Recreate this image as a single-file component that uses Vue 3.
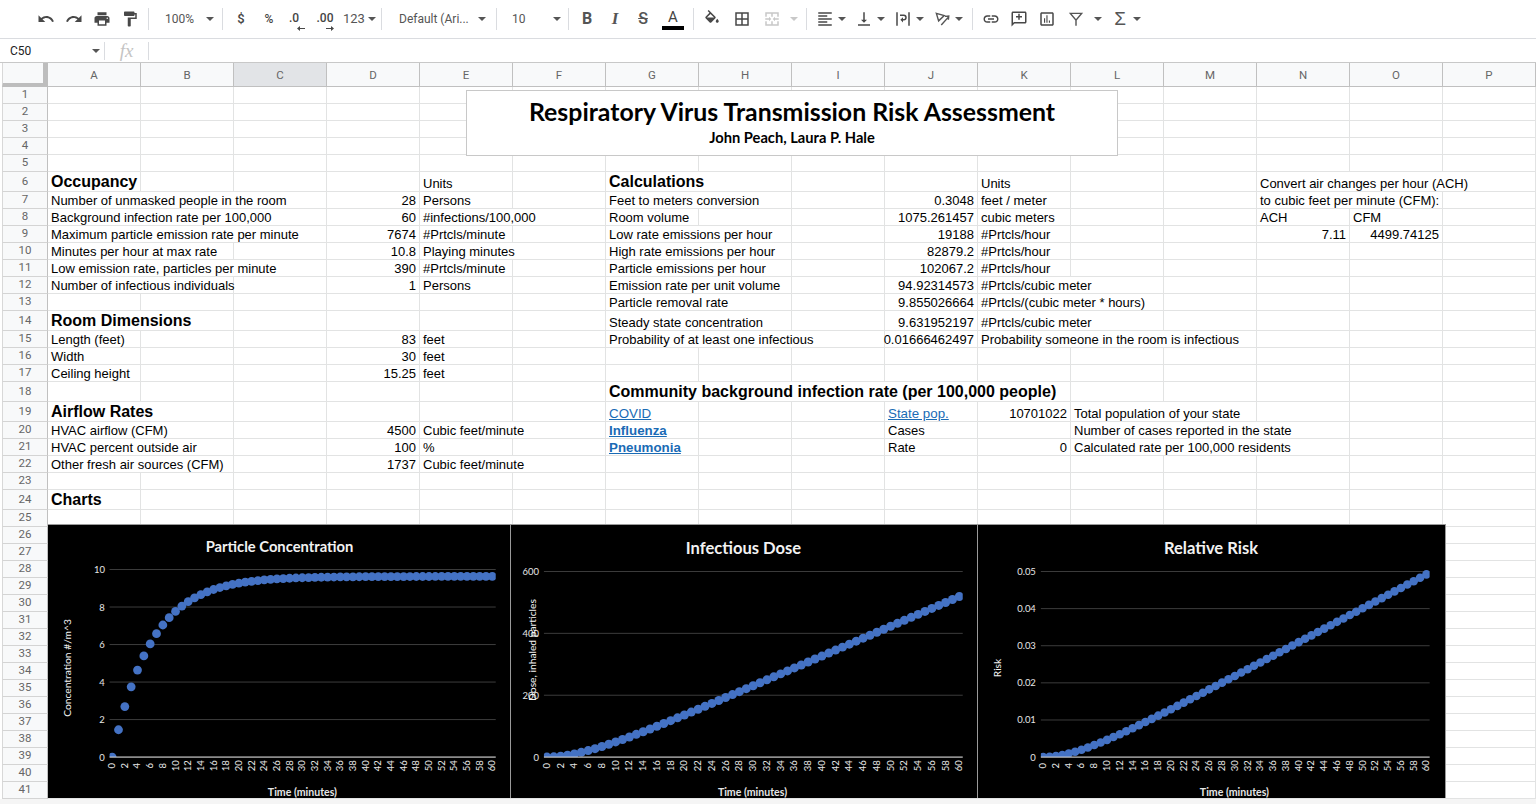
<template>
  <div class="app">
    <div class="toolbar">
      <button class="btn"><svg viewBox="0 0 24 24"><path d="M12.5 8c-2.65 0-5.05.99-6.9 2.6L2 7v9h9l-3.62-3.62c1.39-1.16 3.16-1.88 5.12-1.88 3.54 0 6.55 2.31 7.6 5.5l2.37-.78C21.08 11.03 17.15 8 12.5 8z"/></svg></button>
      <button class="btn"><svg viewBox="0 0 24 24"><path d="M18.4 10.6C16.55 8.99 14.15 8 11.5 8c-4.65 0-8.58 3.03-9.96 7.22L3.9 16c1.05-3.19 4.05-5.5 7.6-5.5 1.95 0 3.73.72 5.12 1.88L13 16h9V7l-3.6 3.6z"/></svg></button>
      <button class="btn"><svg viewBox="0 0 24 24"><path d="M19 8H5c-1.66 0-3 1.34-3 3v6h4v4h12v-4h4v-6c0-1.66-1.34-3-3-3zm-3 11H8v-5h8v5zm3-7c-.55 0-1-.45-1-1s.45-1 1-1 1 .45 1 1-.45 1-1 1zm-1-9H6v4h12V3z"/></svg></button>
      <button class="btn"><svg viewBox="0 0 24 24"><path d="M18 4V3c0-.55-.45-1-1-1H5c-.55 0-1 .45-1 1v4c0 .55.45 1 1 1h12c.55 0 1-.45 1-1V6h1v4H9v11c0 .55.45 1 1 1h2c.55 0 1-.45 1-1v-9h8V4h-3z"/></svg></button>
      <i class="sep"></i>
      <div class="drop zoom"><span>100%</span><b class="tri"></b></div>
      <i class="sep"></i>
      <button class="btn txt">$</button>
      <button class="btn txt small">%</button>
      <button class="btn txt dec one"><span>.0</span><svg viewBox="0 0 8 5"><path d="M0 2.5 3 0v2h5v1H3v2z"/></svg></button>
      <button class="btn txt dec two"><span>.00</span><svg viewBox="0 0 8 5"><path d="M8 2.5 5 0v2H0v1h5v2z"/></svg></button>
      <div class="drop num"><span>123</span><b class="tri"></b></div>
      <i class="sep"></i>
      <div class="drop font"><span>Default (Ari...</span><b class="tri"></b></div>
      <i class="sep"></i>
      <div class="drop size"><span>10</span><b class="tri"></b></div>
      <i class="sep"></i>
      <button class="btn txt bold">B</button>
      <button class="btn txt ital">I</button>
      <button class="btn txt strike">S</button>
      <button class="btn txt color">A<em></em></button>
      <i class="sep sep-a"></i>
      <button class="btn"><svg viewBox="0 0 24 24"><path fill-rule="evenodd" d="M16.56 8.94L7.62 0 6.21 1.41l2.38 2.38-5.15 5.15c-.59.59-.59 1.54 0 2.12l5.5 5.5c.29.29.68.44 1.06.44s.77-.15 1.06-.44l5.5-5.5c.59-.58.59-1.53 0-2.12zM5.21 10L10 5.21 14.79 10H5.21zM19 11.5s-2 2.17-2 3.5c0 1.1.9 2 2 2s2-.9 2-2c0-1.33-2-3.5-2-3.5z"/></svg></button>
      <button class="btn ml2"><svg viewBox="0 0 24 24"><path d="M3 3v18h18V3H3zm8 16H5v-6h6v6zm0-8H5V5h6v6zm8 8h-6v-6h6v6zm0-8h-6V5h6v6z"/></svg></button>
      <button class="btn off ml2"><svg viewBox="0 0 24 24"><path d="M3 3h18v6h-2V5h-6v4h-2V5H5v4H3zM3 15h2v4h6v-4h2v4h6v-4h2v6H3zM3 11h5V9l3 3-3 3v-2H3zM21 13h-5v2l-3-3 3-3v2h5z"/></svg></button>
      <b class="tri merge-tri off"></b>
      <i class="sep"></i>
      <button class="btn"><svg viewBox="0 0 24 24"><path d="M15 15H3v2h12v-2zm0-8H3v2h12V7zM3 13h18v-2H3v2zm0 8h18v-2H3v2zM3 3v2h18V3H3z"/></svg></button>
      <b class="tri lone"></b>
      <button class="btn"><svg viewBox="0 0 24 24"><path d="M16 13h-3V3h-2v10H8l4 4 4-4zM4 19v2h16v-2H4z"/></svg></button>
      <b class="tri lone"></b>
      <button class="btn"><svg viewBox="0 0 24 24"><path d="M3 3h2v18H3zM19 3h2v18h-2zM8 6h5a4 4 0 0 1 0 8h-1v2.5L8.5 13 12 9.5V12h1a2 2 0 0 0 0-4H8z"/></svg></button>
      <b class="tri lone"></b>
      <button class="btn"><svg class="line" viewBox="0 0 24 24"><path d="M4.5 4.5 15 7.5 7.5 14.5zM11 20 20.5 9.5M16 8.5l5-.5-.5 5"/></svg></button>
      <b class="tri lone last"></b>
      <i class="sep"></i>
      <button class="btn"><svg viewBox="0 0 24 24"><path d="M3.9 12c0-1.71 1.39-3.1 3.1-3.1h4V7H7c-2.76 0-5 2.24-5 5s2.24 5 5 5h4v-1.9H7c-1.71 0-3.1-1.39-3.1-3.1zM8 13h8v-2H8v2zm9-6h-4v1.9h4c1.71 0 3.1 1.39 3.1 3.1s-1.39 3.1-3.1 3.1h-4V17h4c2.76 0 5-2.24 5-5s-2.24-5-5-5z"/></svg></button>
      <button class="btn"><svg viewBox="0 0 24 24"><path d="M20 2H4c-1.1 0-2 .9-2 2v18l4-4h14c1.1 0 2-.9 2-2V4c0-1.1-.9-2-2-2zm0 14H5.17L4 17.17V4h16v12zm-9-3h2v-3h3V8h-3V5h-2v3H8v2h3z"/></svg></button>
      <button class="btn"><svg viewBox="0 0 24 24"><path d="M19 3H5c-1.1 0-2 .9-2 2v14c0 1.1.9 2 2 2h14c1.1 0 2-.9 2-2V5c0-1.1-.9-2-2-2zm0 16H5V5h14v14zM8 11h1.5v6H8zm3.2-4h1.5v10h-1.5zm3.3 7H16v3h-1.5z"/></svg></button>
      <button class="btn ml1"><svg class="line" viewBox="0 0 24 24"><path d="M4.5 4.5h15L12 13.5zM12 13.5V21"/></svg></button>
      <b class="tri filter-tri"></b>
      <button class="btn txt sigma">Σ</button>
      <b class="tri lone"></b>
    </div>

    <div class="formula">
      <div class="namebox"><span>C50</span><b class="tri"></b></div>
      <i class="fsep"></i>
      <span class="fx">fx</span>
      <i class="fsep"></i>
    </div>

    <div class="sheet">
      <div class="hrow">
        <div class="corner"></div>
        <div v-for="c in columns" :key="c" class="chead" :class="{ selected: c === 'C' }">{{ c }}</div>
      </div>
      <div v-for="r in rows" :key="r.n" class="row" :style="{ height: r.h + 'px' }">
        <div class="rhead">{{ r.n }}</div>
        <div
          v-for="c in r.cells"
          :key="c.col"
          class="cell"
          :class="c.cls"
          :style="{ gridColumn: 'span ' + c.span }"
        >{{ c.text }}</div>
      </div>

      <div class="titlebox">
        <div class="t1">Respiratory Virus Transmission Risk Assessment</div>
        <div class="t2">John Peach, Laura P. Hale</div>
      </div>

      <div class="charts">
        <svg
          v-for="ch in charts"
          :key="ch.id"
          class="chart"
          :width="ch.w"
          height="274"
          :viewBox="`${ch.left} 524 ${ch.w} 274`"
        >
          <defs>
            <clipPath :id="ch.id"><rect :x="ch.ax0" y="524" :width="ch.ax1 - ch.ax0" :height="ch.y0 - 524" /></clipPath>
          </defs>
          <text class="ctitle" :class="ch.id" :x="ch.tx" :y="ch.ty" text-anchor="middle">{{ ch.title }}</text>
          <line v-for="g in ch.grid" :key="g.label" :x1="ch.ax0" :x2="ch.ax1" :y1="g.y" :y2="g.y" class="gridline" />
          <text v-for="g in ch.grid" :key="'l' + g.label" class="ylab" :x="ch.lx" :y="g.y + 3.5" text-anchor="end">{{ g.label }}</text>
          <g :clip-path="`url(#${ch.id})`">
            <circle v-for="(p, i) in ch.points" :key="i" :cx="p.x" :cy="p.y" :r="ch.r" class="dot" />
          </g>
          <line :x1="ch.ax0" :x2="ch.ax1" :y1="ch.y0" :y2="ch.y0" class="axis" />
          <text
            v-for="t in ch.ticks"
            :key="t.label"
            class="xlab"
            text-anchor="middle"
            :transform="`translate(${t.x + 3},766) rotate(-90)`"
          >{{ t.label }}</text>
          <text class="xtitle" :x="ch.xtx" y="796" text-anchor="middle">Time (minutes)</text>
          <text
            class="ytitle"
            text-anchor="middle"
            :transform="`translate(${ch.ytx},${ch.yty}) rotate(-90)`"
          >{{ ch.ytitle }}</text>
        </svg>
      </div>
    </div>
    <div class="bottom"></div>
  </div>
</template>

<script setup>
const columns = 'ABCDEFGHIJKLMNOP'.split('')

const heights = {}
for (let n = 1; n <= 41; n++) heights[n] = 17
for (const n of [6, 14, 18, 19, 24]) heights[n] = 20

const data = {
  6: [['A', 1, 'Occupancy', 'h'], ['E', 1, 'Units'], ['G', 2, 'Calculations', 'h'], ['K', 1, 'Units'], ['N', 3, 'Convert air changes per hour (ACH)']],
  7: [['A', 3, 'Number of unmasked people in the room'], ['D', 1, '28', 'r'], ['E', 1, 'Persons'], ['G', 2, 'Feet to meters conversion'], ['J', 1, '0.3048', 'r'], ['K', 1, 'feet / meter'], ['N', 2, 'to cubic feet per minute (CFM):']],
  8: [['A', 3, 'Background infection rate per 100,000'], ['D', 1, '60', 'r'], ['E', 2, '#infections/100,000'], ['G', 1, 'Room volume'], ['J', 1, '1075.261457', 'r'], ['K', 1, 'cubic meters'], ['N', 1, 'ACH'], ['O', 1, 'CFM']],
  9: [['A', 3, 'Maximum particle emission rate per minute'], ['D', 1, '7674', 'r'], ['E', 1, '#Prtcls/minute'], ['G', 2, 'Low rate emissions per hour'], ['J', 1, '19188', 'r'], ['K', 1, '#Prtcls/hour'], ['N', 1, '7.11', 'r'], ['O', 1, '4499.74125', 'r']],
  10: [['A', 2, 'Minutes per hour at max rate'], ['D', 1, '10.8', 'r'], ['E', 2, 'Playing minutes'], ['G', 2, 'High rate emissions per hour'], ['J', 1, '82879.2', 'r'], ['K', 1, '#Prtcls/hour']],
  11: [['A', 3, 'Low emission rate, particles per minute'], ['D', 1, '390', 'r'], ['E', 1, '#Prtcls/minute'], ['G', 2, 'Particle emissions per hour'], ['J', 1, '102067.2', 'r'], ['K', 1, '#Prtcls/hour']],
  12: [['A', 2, 'Number of infectious individuals'], ['D', 1, '1', 'r'], ['E', 1, 'Persons'], ['G', 2, 'Emission rate per unit volume'], ['J', 1, '94.92314573', 'r'], ['K', 2, '#Prtcls/cubic meter']],
  13: [['G', 2, 'Particle removal rate'], ['J', 1, '9.855026664', 'r'], ['K', 2, '#Prtcls/(cubic meter * hours)']],
  14: [['A', 2, 'Room Dimensions', 'h'], ['G', 2, 'Steady state concentration'], ['J', 1, '9.631952197', 'r'], ['K', 2, '#Prtcls/cubic meter']],
  15: [['A', 1, 'Length (feet)'], ['D', 1, '83', 'r'], ['E', 1, 'feet'], ['G', 3, 'Probability of at least one infectious'], ['J', 1, '0.01666462497', 'r'], ['K', 3, 'Probability someone in the room is infectious']],
  16: [['A', 1, 'Width'], ['D', 1, '30', 'r'], ['E', 1, 'feet']],
  17: [['A', 1, 'Ceiling height'], ['D', 1, '15.25', 'r'], ['E', 1, 'feet']],
  18: [['G', 5, 'Community background infection rate (per 100,000 people)', 'h']],
  19: [['A', 2, 'Airflow Rates', 'h'], ['G', 1, 'COVID', 'link'], ['J', 1, 'State pop.', 'link'], ['K', 1, '10701022', 'r'], ['L', 2, 'Total population of your state']],
  20: [['A', 2, 'HVAC airflow (CFM)'], ['D', 1, '4500', 'r'], ['E', 2, 'Cubic feet/minute'], ['G', 1, 'Influenza', 'link bl'], ['J', 1, 'Cases'], ['L', 3, 'Number of cases reported in the state']],
  21: [['A', 2, 'HVAC percent outside air'], ['D', 1, '100', 'r'], ['E', 1, '%'], ['G', 1, 'Pneumonia', 'link bl'], ['J', 1, 'Rate'], ['K', 1, '0', 'r'], ['L', 3, 'Calculated rate per 100,000 residents']],
  22: [['A', 2, 'Other fresh air sources (CFM)'], ['D', 1, '1737', 'r'], ['E', 2, 'Cubic feet/minute']],
  24: [['A', 1, 'Charts', 'h']],
}

const rows = []
for (let n = 1; n <= 41; n++) {
  const defs = data[n] || []
  const cells = []
  let i = 0
  while (i < 16) {
    const d = defs.find((x) => x[0] === columns[i])
    if (d) {
      cells.push({ col: columns[i], span: d[1], text: d[2], cls: d[3] || '' })
      i += d[1]
    } else {
      cells.push({ col: columns[i], span: 1, text: '', cls: '' })
      i++
    }
  }
  rows.push({ n, h: heights[n], cells })
}

const tau = 6.09
const conc = (t) => 9.63 * (1 - Math.exp(-t / tau))
const dose = (t) => 9.63 * (t - tau * (1 - Math.exp(-t / tau)))
const risk = (t) => (dose(t) * 0.0492) / 519

function makeChart(o) {
  const step = (o.x60 - o.x0) / 60
  const scale = (o.y0 - o.yTop) / o.max
  const points = []
  for (let t = 0; t <= 60; t++) points.push({ x: o.x0 + t * step, y: o.y0 - o.fn(t) * scale })
  const ticks = []
  for (let t = 0; t <= 60; t += 2) ticks.push({ label: String(t), x: o.x0 + t * step })
  const grid = o.labels.map((l, i) => ({
    label: l,
    y: o.y0 - ((o.y0 - o.yTop) * i) / (o.labels.length - 1),
  }))
  return { ...o, points, ticks, grid }
}

const charts = [
  makeChart({
    id: 'c1', left: 48, w: 463, title: 'Particle Concentration', tx: 280, ty: 552,
    ytitle: 'Concentration #/m^3', ytx: 71, yty: 668, xtx: 303, lx: 105, r: 4.4,
    ax0: 109.7, ax1: 496.7, x0: 112.3, x60: 493.3, y0: 757.3, yTop: 569.3, max: 10,
    labels: ['0', '2', '4', '6', '8', '10'], fn: conc,
  }),
  makeChart({
    id: 'c2', left: 511, w: 467, title: 'Infectious Dose', tx: 744, ty: 554,
    ytitle: 'Dose, inhaled particles', ytx: 536, yty: 650, xtx: 753, lx: 539, r: 4.5,
    ax0: 544, ax1: 963.7, x0: 547, x60: 960.3, y0: 757.3, yTop: 571.3, max: 600,
    labels: ['0', '200', '400', '600'], fn: dose,
  }),
  makeChart({
    id: 'c3', left: 978, w: 468, title: 'Relative Risk', tx: 1211.5, ty: 554,
    ytitle: 'Risk', ytx: 1001, yty: 668, xtx: 1235, lx: 1036, r: 4.3,
    ax0: 1041, ax1: 1430.6, x0: 1043.3, x60: 1427.4, y0: 757.3, yTop: 571.3, max: 0.05,
    labels: ['0', '0.01', '0.02', '0.03', '0.04', '0.05'], fn: risk,
  }),
]
</script>

<style>
html, body { margin: 0; padding: 0; overflow: hidden; background: #fff; }
</style>

<style scoped>
.app {
  width: 1536px;
  height: 804px;
  display: flex;
  flex-direction: column;
  overflow: hidden;
  font-family: "Liberation Sans", Arial, sans-serif;
  background: #fff;
}
.toolbar {
  height: 39px;
  box-sizing: border-box;
  border-bottom: 1px solid #dadce0;
  display: flex;
  align-items: center;
  padding-left: 32px;
  padding-bottom: 1px;
  font-family: Roboto, sans-serif;
  color: #444;
}
.btn {
  position: relative;
  width: 28px;
  height: 28px;
  flex: none;
  border: 0;
  padding: 0;
  background: none;
  display: flex;
  align-items: center;
  justify-content: center;
  color: #444;
  font-family: Roboto, sans-serif;
}
.btn svg { width: 18px; height: 18px; fill: #484848; }
.btn svg.line { fill: none; stroke: #555; stroke-width: 1.9; }
.btn.off svg { fill: #c8c8c8; }
.ml1 { margin-left: 1px; }
.ml2 { margin-left: 2px; }
.sep {
  flex: none;
  width: 1px;
  height: 22px;
  background: #dadce0;
  margin: 0 4px;
}
.sep-a { margin-left: 6px; }
.tri {
  display: block;
  flex: none;
  width: 0;
  height: 0;
  border-left: 4px solid transparent;
  border-right: 4px solid transparent;
  border-top: 4px solid #555;
}
.tri.lone { margin: 0 4px 0 -1px; }
.tri.last { margin-right: 5px; }
.tri.off { border-top-color: #c8c8c8; }
.merge-tri { margin: 0 4px 0 4px; }
.filter-tri { margin: 0 4px 0 4px; }
.drop {
  flex: none;
  display: flex;
  align-items: center;
  justify-content: space-between;
  box-sizing: border-box;
  height: 28px;
  font-size: 12px;
  color: #555;
}
.zoom { width: 65px; padding-left: 12px; padding-right: 4px; }
.num { width: 38px; font-size: 13px; justify-content: flex-start; gap: 3px; padding-left: 4px; }
.font { width: 106px; padding-left: 13px; padding-right: 6px; }
.size { width: 63px; padding-left: 11px; padding-right: 3px; }
.txt { font-size: 13px; font-weight: 500; }
.small { font-size: 12px; }
.dec { font-size: 12px; }
.dec span { position: relative; top: -1px; }
.dec.one span { left: -3px; }
.dec svg { position: absolute; width: 8px; height: 5px; top: 21px; }
.dec.one svg { left: 14px; }
.dec.two svg { left: 15px; }
.bold { font-size: 16px; font-weight: 700; color: #555; }
.ital { font-size: 17px; font-style: italic; font-family: "Liberation Serif", serif; font-weight: 700; color: #555; }
.strike { font-size: 16px; text-decoration: line-through; color: #555; }
.color { flex-direction: column; font-size: 15px; line-height: 15px; font-weight: 400; color: #444; padding-top: 2px; box-sizing: border-box; margin-left: 2px; }
.color em { display: block; width: 22px; height: 4px; background: #000; margin-top: 1px; }
.sigma { font-family: "Liberation Sans", sans-serif; font-size: 19px; font-weight: 400; color: #555; }

.formula {
  height: 24px;
  box-sizing: border-box;
  border-bottom: 1px solid #c8c8c8;
  display: flex;
  align-items: center;
}
.namebox {
  width: 104px;
  box-sizing: border-box;
  padding: 0 4px 0 10px;
  display: flex;
  align-items: center;
  justify-content: space-between;
  font-size: 12px;
  font-family: Roboto, sans-serif;
  color: #222;
}
.fsep { width: 1px; height: 18px; background: #dadce0; }
.fx {
  width: 43px;
  text-align: center;
  font-family: "Liberation Serif", serif;
  font-style: italic;
  font-size: 19px;
  color: #c4c4c4;
}

.sheet { position: relative; flex: none; padding-left: 2px; }
.hrow, .row {
  display: grid;
  grid-template-columns: 46px repeat(16, 93px);
}
.hrow { height: 24px; }
.corner {
  box-sizing: border-box;
  background: #f8f9fa;
  border-right: 5px solid #bdbdbd;
  border-bottom: 4px solid #bdbdbd;
  border-left: 1px solid #d8d8d8;
}
.chead {
  box-sizing: border-box;
  background: #f8f9fa;
  border-right: 1px solid #c0c0c0;
  border-bottom: 1px solid #c0c0c0;
  display: flex;
  align-items: center;
  justify-content: center;
  font-family: Roboto, sans-serif;
  font-size: 11.5px;
  color: #666;
}
.chead.selected { background: #e2e4e7; }
.rhead {
  box-sizing: border-box;
  background: #f8f9fa;
  border-left: 1px solid #d8d8d8;
  border-right: 1px solid #c0c0c0;
  border-bottom: 1px solid #d4d4d4;
  padding-bottom: 2px;
  display: flex;
  align-items: center;
  justify-content: center;
  font-family: Roboto, sans-serif;
  font-size: 11.5px;
  color: #666;
}
.cell {
  box-sizing: border-box;
  min-width: 0;
  border-right: 1px solid #e2e3e3;
  border-bottom: 1px solid #e2e3e3;
  padding: 0 3px;
  font-size: 13px;
  line-height: 14px;
  color: #000;
  white-space: nowrap;
  display: flex;
  align-items: flex-end;
}
.cell.r { justify-content: flex-end; }
.cell.h { font-size: 16px; font-weight: 700; line-height: 19px; }
.cell.link { color: #1a6bb5; text-decoration: underline; font-size: 13.33px; }
.cell.bl { font-weight: 700; }

.titlebox {
  position: absolute;
  left: 466px;
  top: 27px;
  width: 652px;
  height: 66px;
  box-sizing: border-box;
  background: #fff;
  border: 1px solid #c8c8c8;
  display: flex;
  flex-direction: column;
  align-items: center;
  font-family: Lato, sans-serif;
  font-weight: 700;
  color: #000;
}
.t1 { font-size: 24.85px; line-height: 30px; margin-top: 5px; }
.t2 { font-size: 14.7px; line-height: 18px; margin-top: 2px; }

.charts {
  position: absolute;
  left: 48px;
  top: 461px;
  display: flex;
  background: #000;
  border-top: 1px solid #9a9a9a;
  height: 273px;
  overflow: hidden;
}
.chart {
  flex: none;
  display: block;
  margin-top: -1px;
  background: #000;
  border-right: 1px solid #9a9a9a;
  box-sizing: border-box;
}
.chart text { font-family: Lato, sans-serif; fill: #e6e6e6; }
.chart .ctitle { font-weight: 700; font-size: 16.6px; fill: #f2f2f2; }
.chart .ctitle.c1 { font-size: 14.8px; }
.chart .ylab { font-size: 9.5px; }
.chart .xlab { font-size: 9.5px; }
.chart .xtitle { font-size: 10.6px; font-weight: 700; }
.chart .ytitle { font-size: 10.3px; fill: #f4f4f4; }
.gridline { stroke: #3c3c3c; stroke-width: 1; }
.axis { stroke: #d9d9d9; stroke-width: 1; }
.dot { fill: #4472c4; }

.bottom { flex: 1; background: #f5f5f5; }
</style>
